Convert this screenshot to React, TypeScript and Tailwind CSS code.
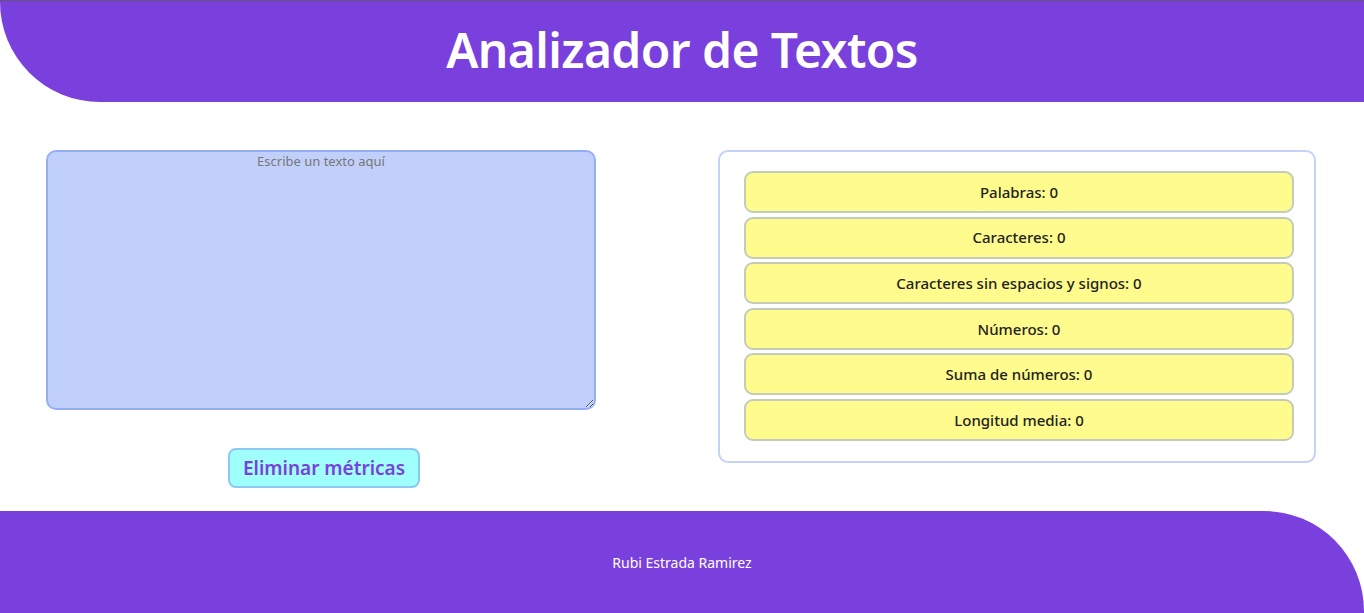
import React from "react";

const metrics = [
  "Palabras: 0",
  "Caracteres: 0",
  "Caracteres sin espacios y signos: 0",
  "Números: 0",
  "Suma de números: 0",
  "Longitud media: 0",
];

export default function App() {
  return (
    <div
      className="w-[1364px] h-[613px] bg-white flex flex-col overflow-hidden"
      style={{ fontFamily: '"Noto Sans", "Open Sans", sans-serif' }}
    >
      <div className="h-[2px] bg-[#6e4aa8]" />
      <header className="h-[100px] bg-[#7a40de] rounded-bl-[100px] flex items-center justify-center">
        <h1 className="text-white text-[48px] font-semibold tracking-[-0.6px] leading-none pb-[4px]">
          Analizador de Textos
        </h1>
      </header>
      <main className="flex-1 flex justify-between pl-[46px] pr-[48px] pt-[48px]">
        <div className="flex flex-col items-center w-[550px]">
          <textarea
            className="w-[550px] h-[260px] bg-[#c1d0fa] border-2 border-[#94aef6] rounded-[10px] text-center text-[13px] text-[#333] placeholder:text-[#777] outline-none leading-[18px] pt-0"
            placeholder="Escribe un texto aquí"
          />
          <button className="mt-[38px] ml-[6px] w-[192px] h-[40px] bg-[#9ffffa] border-2 border-[#8ec9f4] rounded-[8px] text-[#7a40de] text-[19px] font-semibold leading-none">
            Eliminar métricas
          </button>
        </div>
        <div className="w-[598px] h-[313px] border-2 border-[#c4d2fa] rounded-[10px] pl-[24px] pr-[20px] pt-[19px] flex flex-col gap-[3.6px]">
          {metrics.map((m) => (
            <div
              key={m}
              className="h-[42px] shrink-0 bg-[#fffb8c] border-2 border-[#c3ccb9] rounded-[9px] flex items-center justify-center text-[15px] font-medium text-[#222]"
            >
              {m}
            </div>
          ))}
        </div>
      </main>
      <footer className="h-[102px] bg-[#7a40de] rounded-tr-[100px] flex items-center justify-center">
        <span className="text-white text-[14px]">Rubi Estrada Ramirez</span>
      </footer>
    </div>
  );
}
